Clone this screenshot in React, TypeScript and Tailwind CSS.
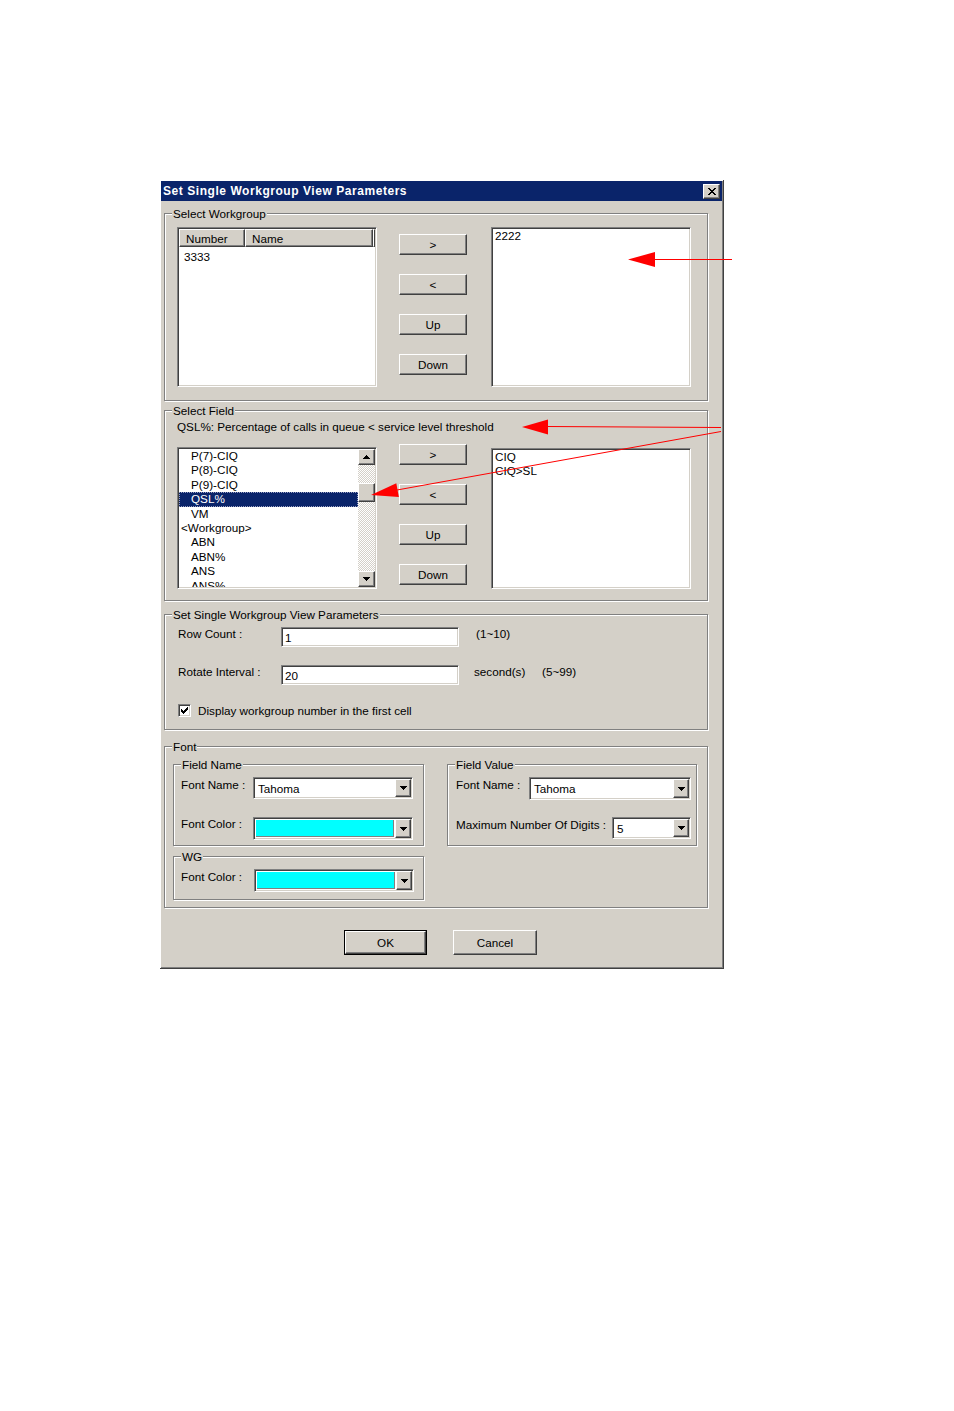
import React from 'react';

const raised =
  'bg-[#d4d0c8] border border-t-white border-l-white border-r-[#404040] border-b-[#404040] shadow-[inset_-1px_-1px_0_#808080]';
const sunken =
  'border border-t-[#808080] border-l-[#808080] border-r-white border-b-white shadow-[inset_1px_1px_0_#404040,inset_-1px_-1px_0_#d4d0c8] p-[1px]';
const checker = 'bg-[repeating-conic-gradient(#ffffff_0%_25%,#d4d0c8_0%_50%)] bg-size-[2px_2px]';

function Pixels({ rows, w, h }: { rows: string[]; w: number; h: number }) {
  return (
    <svg width={w} height={h} viewBox={`0 0 ${w} ${h}`} shapeRendering="crispEdges">
      {rows.flatMap((r, y) =>
        r.split('').map((c, x) => (c === 'X' ? <rect key={`${x}-${y}`} x={x} y={y} width="1" height="1" fill="#000" /> : null))
      )}
    </svg>
  );
}

const triDown = ['XXXXXXX', '.XXXXX.', '..XXX..', '...X...'];
const triUp = ['...X...', '..XXX..', '.XXXXX.', 'XXXXXXX'];
const closeX = ['XX....XX', '.XX..XX.', '..XXXX..', '...XX...', '..XXXX..', '.XX..XX.', 'XX....XX'];
const check = ['......X', '.....XX', 'X...XXX', 'XX.XXX.', 'XXXXX..', '.XXX...', '..X....'];

function Group({ label, className = '', children }: { label: string; className?: string; children: React.ReactNode }) {
  return (
    <fieldset className={`min-w-0 border border-[#808080] shadow-[inset_1px_1px_0_#ffffff,1px_1px_0_#ffffff] ${className}`}>
      <legend className="ml-[7px] px-[1px] leading-[13px] bg-[#d4d0c8]">{label}</legend>
      {children}
    </fieldset>
  );
}

function Btn({ children, className = '' }: { children: React.ReactNode; className?: string }) {
  return <div className={`${raised} flex items-center justify-center ${className}`}>{children}</div>;
}

function DropBtn() {
  return (
    <div className={`${raised} w-[16px] shrink-0 flex items-center justify-center`}>
      <Pixels rows={triDown} w={7} h={4} />
    </div>
  );
}

function Combo({ className = '', value, color }: { className?: string; value?: string; color?: boolean }) {
  return (
    <div className={`${sunken} bg-white flex ${className}`}>
      {color ? (
        <div className="flex-1 m-[1px] bg-[#00ffff] border-b border-r border-b-[#808080] border-r-[#808080]" />
      ) : (
        <div className="flex-1 flex items-center pl-[3px]">{value}</div>
      )}
      <DropBtn />
    </div>
  );
}

const fields = [
  { t: 'P(7)-CIQ', sub: true },
  { t: 'P(8)-CIQ', sub: true },
  { t: 'P(9)-CIQ', sub: true },
  { t: 'QSL%', sub: true, sel: true },
  { t: 'VM', sub: true },
  { t: '<Workgroup>', sub: false },
  { t: 'ABN', sub: true },
  { t: 'ABN%', sub: true },
  { t: 'ANS', sub: true },
  { t: 'ANS%', sub: true },
];

function MoveButtons({ className = '' }: { className?: string }) {
  return (
    <div className={`ml-[22px] w-[68px] flex flex-col gap-[19px] ${className}`}>
      <Btn className="h-[21px]">&gt;</Btn>
      <Btn className="h-[21px]">&lt;</Btn>
      <Btn className="h-[21px]">Up</Btn>
      <Btn className="h-[21px]">Down</Btn>
    </div>
  );
}

export default function App() {
  return (
    <div className="relative w-[954px] h-[1411px] bg-white pt-[180px] pl-[160px] font-['Liberation_Sans',Arial,sans-serif] text-[11.7px] leading-[13px] text-black">
      <div className="w-[564px] h-[789px] bg-[#d4d0c8] p-[1px] pr-[2px] shadow-[inset_-1px_-1px_0_#404040,inset_1px_1px_0_#ffffff,inset_-2px_-2px_0_#808080]">
        {/* Title bar */}
        <div className="h-[20px] bg-[#0a246a] flex items-center justify-between pl-[2px] pr-[2px]">
          <span className="text-white font-bold text-[12px] tracking-[0.55px]">Set Single Workgroup View Parameters</span>
          <div className={`${raised} w-[17px] h-[15px] flex items-center justify-center`}>
            <Pixels rows={closeX} w={8} h={7} />
          </div>
        </div>

        <div className="ml-[3px] w-[544px]">
          {/* Select Workgroup */}
          <Group label="Select Workgroup" className="mt-[6px]">
            <div className="flex pl-[12px] pt-[7px] pb-[13px]">
              <div className={`${sunken} w-[200px] h-[160px] bg-white flex flex-col`}>
                <div className="flex h-[18px] shrink-0">
                  <div className={`${raised} w-[66px] flex items-center pl-[6px]`}>Number</div>
                  <div className={`${raised} w-[128px] flex items-center pl-[6px]`}>Name</div>
                  <div className={`${raised} flex-1`} />
                </div>
                <div className="pl-[5px] mt-[3px] leading-[14px]">3333</div>
              </div>
              <MoveButtons className="pt-[7px]" />
              <div className={`${sunken} ml-[24px] w-[200px] h-[160px] bg-white`}>
                <div className="pl-[2px] leading-[14px]">2222</div>
              </div>
            </div>
          </Group>

          {/* Select Field */}
          <Group label="Select Field" className="mt-[3px]">
            <div className="pl-[12px] pb-[11px]">
              <div className="mt-[3px]">QSL%: Percentage of calls in queue &lt; service level threshold</div>
              <div className="flex items-start mt-[11px]">
                <div className={`${sunken} mt-[3px] w-[200px] h-[142px] bg-white flex`}>
                  <div className="flex-1 overflow-hidden">
                    {fields.map(f => (
                      <div
                        key={f.t}
                        className={`h-[14.4px] leading-[14.4px] whitespace-nowrap ${f.sub ? 'pl-[12px]' : 'pl-[2px]'} ${
                          f.sel ? 'bg-[#0a246a] text-white outline-1 outline-dotted outline-[#9aa0c0] -outline-offset-1' : ''
                        }`}
                      >
                        {f.t}
                      </div>
                    ))}
                  </div>
                  <div className={`w-[17px] flex flex-col ${checker}`}>
                    <div className={`${raised} h-[16px] shrink-0 flex items-center justify-center`}>
                      <Pixels rows={triUp} w={7} h={4} />
                    </div>
                    <div className="h-[18px] shrink-0" />
                    <div className={`${raised} h-[19px] shrink-0`} />
                    <div className="flex-1" />
                    <div className={`${raised} h-[16px] shrink-0 flex items-center justify-center`}>
                      <Pixels rows={triDown} w={7} h={4} />
                    </div>
                  </div>
                </div>
                <MoveButtons />
                <div className={`${sunken} ml-[24px] mt-[4px] w-[200px] h-[141px] bg-white`}>
                  <div className="pl-[2px] leading-[14.4px]">CIQ</div>
                  <div className="pl-[2px] leading-[14.4px]">CIQ&gt;SL</div>
                </div>
              </div>
            </div>
          </Group>

          {/* Parameters */}
          <Group label="Set Single Workgroup View Parameters" className="mt-[7px]">
            <div className="pl-[13px] pb-[12px]">
              <div className="flex items-start mt-[6px]">
                <span className="w-[103px]">Row Count :</span>
                <div className={`${sunken} w-[178px] h-[20px] bg-white flex items-center pl-[3px]`}>1</div>
                <span className="ml-[17px]">(1~10)</span>
              </div>
              <div className="flex items-start mt-[18px]">
                <span className="w-[103px]">Rotate Interval :</span>
                <div className={`${sunken} w-[178px] h-[20px] bg-white flex items-center pl-[3px]`}>20</div>
                <span className="ml-[15px] w-[68px]">second(s)</span>
                <span>(5~99)</span>
              </div>
              <div className="flex items-center mt-[19px]">
                <div className={`${sunken} w-[13px] h-[13px] bg-white flex items-center justify-center`}>
                  <Pixels rows={check} w={7} h={7} />
                </div>
                <span className="ml-[7px]">Display workgroup number in the first cell</span>
              </div>
            </div>
          </Group>

          {/* Font */}
          <Group label="Font" className="mt-[10px]">
            <div className="flex items-start pl-[8px] pt-[5px] pb-[7px]">
              <div className="w-[251px]">
                <Group label="Field Name">
                  <div className="pl-[7px] pb-[5px]">
                    <div className="flex items-start mt-[6px]">
                      <span className="w-[72px] mt-[1px]">Font Name :</span>
                      <Combo className="w-[160px] h-[22px]" value="Tahoma" />
                    </div>
                    <div className="flex items-start mt-[18px]">
                      <span className="w-[72px]">Font Color :</span>
                      <Combo className="w-[160px] h-[23px]" color />
                    </div>
                  </div>
                </Group>
                <Group label="WG" className="mt-[4px]">
                  <div className="pl-[7px] pb-[7px]">
                    <div className="flex items-start mt-[6px]">
                      <span className="w-[73px] mt-[1px]">Font Color :</span>
                      <Combo className="w-[160px] h-[23px]" color />
                    </div>
                  </div>
                </Group>
              </div>
              <div className="ml-[23px] w-[250px]">
                <Group label="Field Value">
                  <div className="pl-[8px] pb-[6px]">
                    <div className="flex items-start mt-[6px]">
                      <span className="w-[73px] mt-[1px]">Font Name :</span>
                      <Combo className="w-[162px] h-[23px]" value="Tahoma" />
                    </div>
                    <div className="flex items-start mt-[17px]">
                      <span className="w-[156px] mt-[1px]">Maximum Number Of Digits :</span>
                      <Combo className="w-[79px] h-[22px]" value="5" />
                    </div>
                  </div>
                </Group>
              </div>
            </div>
          </Group>
        </div>

        {/* OK / Cancel */}
        <div className="flex mt-[22px] ml-[183px]">
          <div className="w-[83px] h-[25px] border border-black flex">
            <Btn className="flex-1">OK</Btn>
          </div>
          <Btn className="ml-[26px] w-[84px] h-[25px]">Cancel</Btn>
        </div>
      </div>

      {/* Red annotation arrows */}
      <svg className="absolute top-0 left-0 pointer-events-none" width="954" height="1411" viewBox="0 0 954 1411">
        <line x1="654" y1="259.5" x2="732" y2="259.5" stroke="#ff0000" strokeWidth="1" />
        <polygon points="628,259.5 655,252 655,267" fill="#ff0000" />
        <line x1="546" y1="426.5" x2="721" y2="427.5" stroke="#ff0000" strokeWidth="1" />
        <polygon points="522,427 548,419.5 548,434.5" fill="#ff0000" />
        <line x1="397" y1="490" x2="721" y2="431.5" stroke="#ff0000" strokeWidth="1" />
        <polygon points="371,495 398.9,497 396.3,483.2" fill="#ff0000" />
      </svg>
    </div>
  );
}
